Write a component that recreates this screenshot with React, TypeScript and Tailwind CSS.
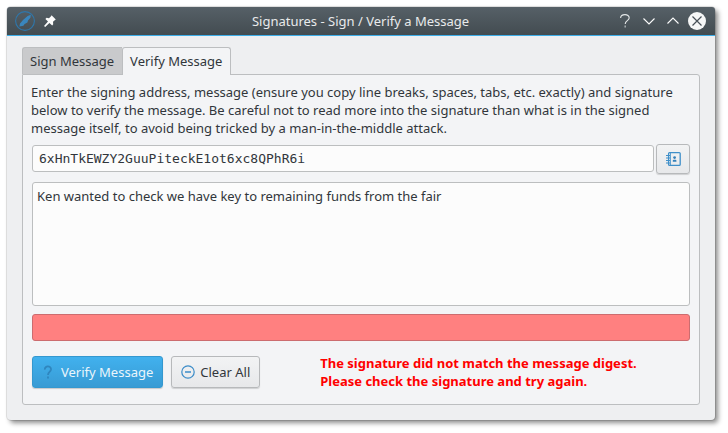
import { useState } from "react";
import type { ReactNode } from "react";

function AppLogo() {
  return (
    <svg width="20" height="20" viewBox="0 0 20 20" aria-hidden="true">
      <circle cx="10" cy="10" r="9.4" fill="none" stroke="#2f77ab" strokeWidth="1.1" />
      <path d="M4.4 15.6 L5 12.4 L8 9 L12.6 5 L15.8 3.8 L15.4 6.8 L13 9.6 L12.4 11.4 L9.6 13 L8.4 14.8 Z" fill="#3a86bd" />
    </svg>
  );
}

function PinIcon() {
  return (
    <svg width="12" height="12" viewBox="0 0 12 12" aria-hidden="true">
      <path d="M7.6 0.2 L11.8 4.4 L11 5 L9 6.8 L9.2 9.2 L8.2 10.4 L5.4 8 L1.2 12 L0 10.9 L4 6.6 L1.4 4 L2.6 2.8 L5 3.2 L7 1.2 Z" fill="#fcfcfc" />
    </svg>
  );
}

function BarButton({ label, children }: { label: string; children: ReactNode }) {
  return (
    <button type="button" aria-label={label} className="flex size-[18px] items-center justify-center">
      {children}
    </button>
  );
}

function TitleBar() {
  return (
    <header className="grid h-[29px] shrink-0 grid-cols-[1fr_auto_1fr] items-center rounded-t-[3px] border-b border-[#3daee9] bg-linear-to-b from-[#566067] to-[#434c51] pr-[9px] pl-2">
      <div className="flex items-center gap-[6px]">
        <AppLogo />
        <BarButton label="Keep on all desktops">
          <PinIcon />
        </BarButton>
      </div>
      <h1 className="text-[13px] leading-[18px] text-[#e8eaeb]">Signatures - Sign / Verify a Message</h1>
      <div className="flex items-center justify-end gap-[6px]">
        <BarButton label="Help">
          <svg width="18" height="18" viewBox="0 0 18 18" fill="none" stroke="#e4e7e8" strokeWidth="1.1">
            <path d="M4.6 6 C4.8 1.4 13.4 1.6 13.2 6 C13 8.8 9.2 8.6 9.2 12" />
            <path d="M9.2 13.6 V15.4" strokeWidth="1.5" stroke="#a9afb2" />
          </svg>
        </BarButton>
        <BarButton label="Minimize">
          <svg width="18" height="18" viewBox="0 0 18 18" fill="none" stroke="#fcfcfc" strokeWidth="1.1">
            <path d="M3.5 6.5 L9 12 L14.5 6.5" />
          </svg>
        </BarButton>
        <BarButton label="Maximize">
          <svg width="18" height="18" viewBox="0 0 18 18" fill="none" stroke="#fcfcfc" strokeWidth="1.1">
            <path d="M3.5 11.5 L9 6 L14.5 11.5" />
          </svg>
        </BarButton>
        <BarButton label="Close">
          <svg width="18" height="18" viewBox="0 0 18 18">
            <circle cx="9" cy="9" r="9" fill="#f5f6f6" />
            <path d="M4.5 4.5 L13.5 13.5 M13.5 4.5 L4.5 13.5" stroke="#475057" strokeWidth="1.2" />
          </svg>
        </BarButton>
      </div>
    </header>
  );
}

function AddressBookIcon() {
  return (
    <svg width="16" height="16" viewBox="0 0 16 16" fill="none" stroke="#3f8fc9" aria-hidden="true">
      <rect x="3.6" y="1.6" width="11.6" height="12.8" rx="1" strokeWidth="1.3" />
      <path d="M5.5 2 V14" strokeWidth="0.8" />
      <path d="M1 4.5 H5 M1 7 H5 M1 9.5 H5 M1 12 H5" />
      <circle cx="9.6" cy="6.6" r="1.4" fill="#3480ba" stroke="none" />
      <path d="M7.8 10.8 V9.8 Q7.8 8.8 8.8 8.8 H10.4 Q11.4 8.8 11.4 9.8 V10.8 Z" fill="#3480ba" stroke="none" />
    </svg>
  );
}

const plainButton =
  "flex items-center justify-center rounded-[3px] border border-[#b7b9bb] bg-linear-to-b from-[#f2f3f4] to-[#e7e8ea] shadow-[0_1px_1px_rgba(0,0,0,0.15)]";

export default function App() {
  const [address, setAddress] = useState("6xHnTkEWZY2GuuPiteckE1ot6xc8QPhR6i");
  const [message, setMessage] = useState("Ken wanted to check we have key to remaining funds from the fair");
  const [signature, setSignature] = useState("");

  const clearAll = () => {
    setAddress("");
    setMessage("");
    setSignature("");
  };

  return (
    <div className="min-h-screen bg-white pt-[7px] pr-[13px] pb-3 pl-[7px] font-['Noto_Sans',sans-serif] text-[13px] leading-[18px] text-[#31363b]">
      <main className="rounded-[4px] bg-[#eeeff1] shadow-[0_0_0_1px_rgba(0,0,0,0.1),3px_3px_5px_rgba(0,0,0,0.45)]">
        <TitleBar />
        <div className="px-[15px] pt-[11px] pb-[15px]">
          <div role="tablist" className="flex items-end">
            <button
              type="button"
              role="tab"
              aria-selected="false"
              className="h-[27px] rounded-tl-[3px] border-t border-l border-[#bcbec0] bg-[#c9cacc] pr-2 pl-[7px]"
            >
              Sign Message
            </button>
            <button
              type="button"
              role="tab"
              aria-selected="true"
              className="relative z-10 -mb-px h-7 rounded-t-[3px] border border-b-0 border-[#bcbec0] bg-[#f3f4f6] pr-2 pb-[2px] pl-[7px]"
            >
              Verify Message
            </button>
          </div>
          <section role="tabpanel" className="rounded-[3px] rounded-tl-none border border-[#bcbec0] bg-[#f3f4f6] px-[9px] pt-2 pb-[14px]">
            <p className="-mx-px">
              Enter the signing address, message (ensure you copy line breaks, spaces, tabs, etc. exactly) and signature
              below to verify the message. Be careful not to read more into the signature than what is in the signed
              message itself, to avoid being tricked by a man-in-the-middle attack.
            </p>
            <div className="mt-[7px] flex items-center gap-[2px]">
              <input
                aria-label="Signing address"
                value={address}
                onChange={(e) => setAddress(e.target.value)}
                className="mb-px h-[27px] min-w-0 flex-1 rounded-[3px] border border-[#bcbebf] bg-[#fcfcfc] px-[6px] font-['DejaVu_Sans_Mono',monospace] outline-none"
              />
              <button type="button" aria-label="Choose from address book" className={`${plainButton} h-[30px] w-[34px]`}>
                <AddressBookIcon />
              </button>
            </div>
            <textarea
              aria-label="Message"
              value={message}
              onChange={(e) => setMessage(e.target.value)}
              className="mt-2 block h-[124px] w-full resize-none rounded-[3px] border border-[#bcbebf] bg-[#fcfcfc] p-1 outline-none"
            />
            <input
              aria-label="Signature"
              value={signature}
              onChange={(e) => setSignature(e.target.value)}
              className="mt-2 block h-[27px] w-full rounded-[3px] border border-[#cc6c6f] bg-[#ff8080] px-[6px] font-['DejaVu_Sans_Mono',monospace] outline-none"
            />
            <div className="mt-[13px] flex items-center">
              <button
                type="button"
                className="flex h-8 items-center gap-[7px] rounded-[3px] border border-[#3498cf] bg-linear-to-b from-[#41b1ee] to-[#389bd4] pr-[9px] pl-[7px] text-[#eaf5fb] shadow-[0_1px_1px_rgba(0,0,0,0.18)]"
              >
                <svg width="14" height="16" viewBox="0 0 14 16" fill="none" stroke="#2f86be" strokeWidth="1.8" aria-hidden="true">
                  <path d="M4.8 5.6 C4.6 1.4 11.2 1.4 11 5.4 C10.8 8 8 8 8 11" />
                  <path d="M8 12.4 V14.4" />
                </svg>
                Verify Message
              </button>
              <button type="button" onClick={clearAll} className={`${plainButton} ml-2 h-8 gap-[5px] px-[9px]`}>
                <svg width="14" height="14" viewBox="0 0 14 14" fill="none" stroke="#3b8cc8" strokeWidth="1.2" aria-hidden="true">
                  <circle cx="7" cy="7" r="6.2" />
                  <path d="M4 7 H10" strokeWidth="1.5" />
                </svg>
                Clear All
              </button>
              <p role="status" className="ml-[60px] font-bold text-[#ff0000]">
                The signature did not match the message digest.
                <br />
                Please check the signature and try again.
              </p>
            </div>
          </section>
        </div>
      </main>
    </div>
  );
}
